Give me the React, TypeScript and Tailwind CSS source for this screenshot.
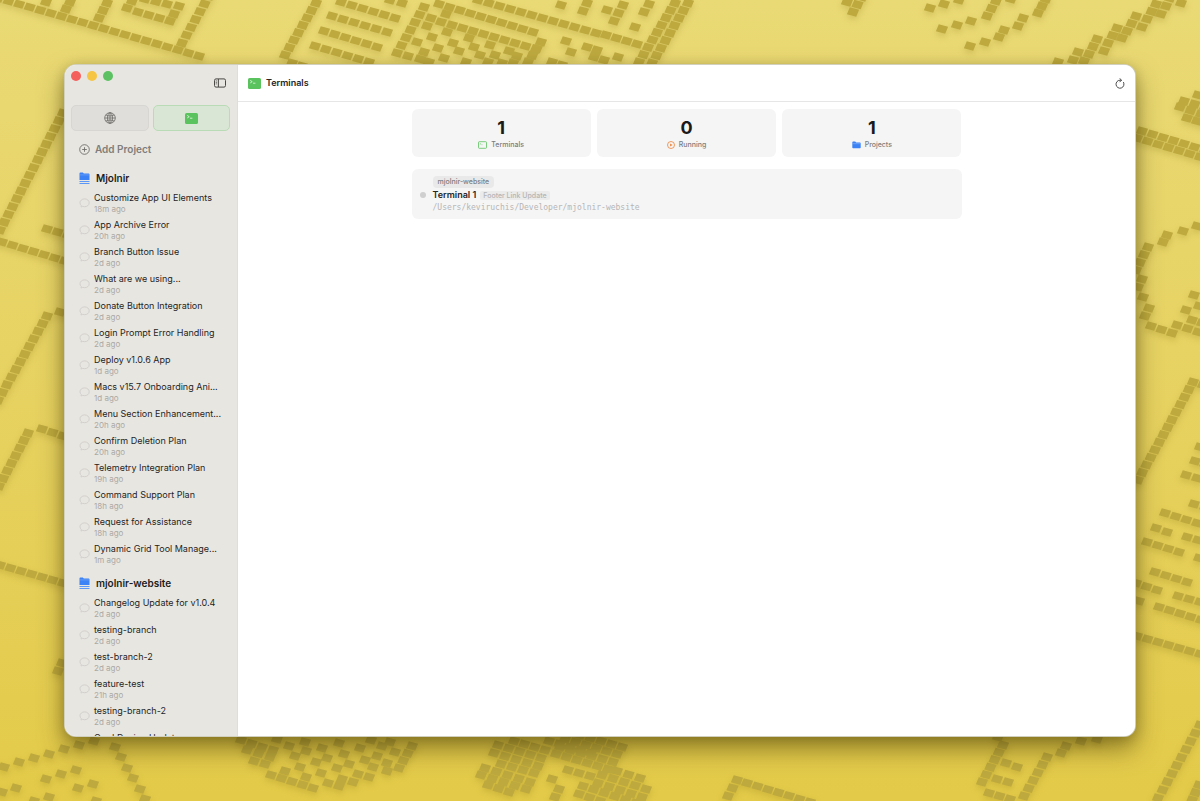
import React from 'react';

type Run = [number, number, number, number, number];

interface Conversation {
  title: string;
  time?: string;
}

interface Project {
  name: string;
  conversations: Conversation[];
}

const PROJECTS: Project[] = [
  {
    name: 'Mjolnir',
    conversations: [
      { title: 'Customize App UI Elements', time: '18m ago' },
      { title: 'App Archive Error', time: '20h ago' },
      { title: 'Branch Button Issue', time: '2d ago' },
      { title: 'What are we using...', time: '2d ago' },
      { title: 'Donate Button Integration', time: '2d ago' },
      { title: 'Login Prompt Error Handling', time: '2d ago' },
      { title: 'Deploy v1.0.6 App', time: '1d ago' },
      { title: 'Macs v15.7 Onboarding Ani...', time: '1d ago' },
      { title: 'Menu Section Enhancement...', time: '20h ago' },
      { title: 'Confirm Deletion Plan', time: '20h ago' },
      { title: 'Telemetry Integration Plan', time: '19h ago' },
      { title: 'Command Support Plan', time: '18h ago' },
      { title: 'Request for Assistance', time: '18h ago' },
      { title: 'Dynamic Grid Tool Manage...', time: '1m ago' },
    ],
  },
  {
    name: 'mjolnir-website',
    conversations: [
      { title: 'Changelog Update for v1.0.4', time: '2d ago' },
      { title: 'testing-branch', time: '2d ago' },
      { title: 'test-branch-2', time: '2d ago' },
      { title: 'feature-test', time: '21h ago' },
      { title: 'testing-branch-2', time: '2d ago' },
      { title: 'Card Design Update' },
    ],
  },
];

// Wallpaper tiles: [x1, y1, x2, y2, count], tiles spread evenly from start to end
const RUNS: Run[] = [
  // top left
  [-2, -2, 199, 56, 20], [70, 2, 66, 9, 2], [107, 3, 99, 18, 3], [132, 1, 127, 8, 2],
  [138, 12, 170, 21, 4], [174, 14, 179, 6, 2], [145, -1, 167, 4, 3], [209, -4, 182, 43, 7],
  // top centre
  [316, 3, 285, 55, 8], [292, 63, 302, 66, 2], [341, 2, 395, 18, 6], [332, 16, 387, 32, 6],
  [324, 31, 377, 47, 6], [315, 46, 369, 62, 6], [390, 0, 402, 3, 2], [424, 7, 397, 53, 7],
  [408, 56, 420, 59, 2], [431, 18, 427, 26, 2], [439, 4, 533, 32, 10], [446, 14, 441, 22, 2],
  [452, 25, 536, 49, 9], [541, 42, 528, 62, 4], [478, 0, 596, 33, 12], [606, 35, 637, 44, 4],
  [587, 3, 583, 11, 2], [587, 47, 597, 50, 2], [594, 57, 604, 60, 2], [552, 62, 562, 65, 2],
  [623, 5, 614, 21, 3], [649, 4, 644, 12, 2], [675, 3, 639, 62, 9], [688, 3, 652, 63, 9],
  [862, -3, 853, 12, 3],
  // top right
  [996, 1, 987, 16, 3], [1004, 30, 999, 37, 2], [1023, 18, 1018, 26, 2], [1046, -1, 1038, 13, 3],
  [1078, 52, 1073, 60, 2], [1089, 54, 1084, 61, 2], [1097, 39, 1089, 54, 3], [1117, 28, 1108, 43, 3],
  [1108, 43, 1104, 51, 2], [1127, 31, 1122, 38, 2], [1136, 16, 1127, 31, 3], [1147, 19, 1142, 27, 2],
  [1156, 4, 1147, 19, 3], [1166, 6, 1161, 14, 2],
  // right edge
  [1184, 101, 1205, 107, 3], [1180, 107, 1201, 114, 3], [1187, 118, 1207, 124, 3],
  [1142, 131, 1205, 150, 7], [1137, 138, 1200, 157, 7], [1167, 235, 1163, 242, 2],
  [1148, 247, 1136, 270, 4], [1142, 279, 1138, 287, 2], [1149, 308, 1145, 316, 2],
  [1151, 326, 1172, 333, 3], [1177, 325, 1198, 332, 3], [1192, 320, 1202, 323, 2],
  [1193, 382, 1138, 480, 14], [1195, 461, 1205, 464, 2], [1186, 475, 1197, 478, 2],
  [1194, 504, 1205, 507, 2], [1165, 513, 1197, 523, 4], [1156, 528, 1167, 532, 2],
  [1187, 537, 1198, 540, 2], [1147, 542, 1179, 552, 4], [1155, 572, 1187, 582, 4],
  [1136, 583, 1157, 590, 3], [1178, 596, 1200, 602, 3], [1159, 607, 1201, 620, 5],
  [1137, 636, 1200, 654, 7], [1200, 725, 1158, 798, 10], [1199, 785, 1192, 800, 3],
  // left edge
  [63, 113, 0, 230, 16], [2, 242, 65, 261, 7], [47, 229, 68, 235, 3], [47, 316, -2, 400, 12],
  [60, 312, 70, 315, 2], [28, 433, -1, 486, 8], [42, 429, 63, 436, 3], [0, 565, 63, 583, 7],
  // bottom
  [241, 740, 262, 747, 3], [247, 750, 270, 757, 3], [254, 761, 265, 764, 2],
  [271, 775, 313, 788, 5], [412, 746, 399, 768, 4],
  [514, 741, 545, 750, 4], [498, 745, 541, 758, 5], [494, 753, 538, 766, 5],
  [501, 764, 534, 773, 4], [485, 768, 530, 782, 5], [481, 775, 526, 789, 5],
  [488, 785, 509, 792, 3], [549, 741, 591, 753, 5], [580, 735, 622, 747, 5],
  [565, 739, 617, 754, 6], [560, 747, 613, 762, 6], [556, 754, 608, 769, 6],
  [568, 770, 590, 776, 3], [559, 789, 555, 797, 2], [617, 771, 640, 778, 3],
  [602, 775, 646, 789, 5], [598, 783, 642, 797, 5], [583, 786, 636, 803, 6],
  [579, 794, 600, 801, 3], [737, 780, 728, 796, 3], [747, 783, 810, 802, 7],
  [1003, 745, 982, 782, 6], [1006, 763, 1017, 767, 2], [997, 779, 1008, 782, 2],
  [989, 793, 1010, 799, 3], [1047, 757, 1024, 796, 6], [1066, 746, 1061, 753, 2],
];

const SINGLES: [number, number][] = [
  [46, 2], [561, 5], [566, 41], [571, 52], [607, 10], [635, 27], [618, 57], [847, 2],
  [447, 32], [432, 37], [417, 42], [453, 43], [438, 48], [424, 52], [469, 38],
  [459, 51], [444, 58], [474, 47], [490, 45], [480, 55], [495, 55], [509, 51], [466, 62], [488, 62],
  [502, 63], [517, 56], [513, 63], [429, 62],
  [930, 8], [944, 4], [959, 0], [942, 29], [957, 25], [971, 21], [970, 46], [985, 42],
  [1011, -1], [1058, 62], [1181, 3], [1170, -2], [1198, 95], [1197, 226], [1183, 231],
  [1143, 297], [1186, 310], [1194, 295], [1199, 306], [1203, 385], [1200, 447], [1199, 558],
  [1139, 601], [62, 663], [58, 671],
  [4, 767], [19, 762], [34, 758], [49, 754], [64, 749], [79, 745], [94, 741], [115, 747],
  [121, 757], [127, 768], [133, 778], [140, 789], [145, 799], [76, 770], [61, 774], [46, 779],
  [93, 784], [78, 788], [16, 788], [2, 792], [49, 797], [34, 801], [96, 801],
  [277, 739], [305, 742], [289, 746], [273, 750], [339, 743], [322, 748], [306, 751],
  [295, 756], [316, 762], [300, 767], [285, 771], [327, 758], [344, 754], [349, 764],
  [337, 768], [321, 773], [306, 777], [328, 783], [339, 786], [342, 779], [353, 782],
  [358, 774], [369, 777], [373, 767], [387, 771], [365, 760], [377, 756], [360, 748],
  [390, 742], [371, 740], [382, 746], [395, 752], [387, 763], [552, 779],
  [1081, 741], [1097, 739], [998, 737],
];

const tile = (x: number, y: number) => `M${x - 3.2} ${y - 4.7}l9.3 2.5l-2.9 6.9l-9.3 -2.5z`;

const tilePath = [
  ...RUNS.flatMap(([x1, y1, x2, y2, n]) =>
    Array.from({ length: n }, (_, i) => tile(x1 + ((x2 - x1) * i) / (n - 1), y1 + ((y2 - y1) * i) / (n - 1)))
  ),
  ...SINGLES.map(([x, y]) => tile(x, y)),
].join('');

const Wallpaper: React.FC = () => (
  <svg className="absolute inset-0 w-full h-full" viewBox="0 0 1200 801" preserveAspectRatio="xMidYMid slice" aria-hidden="true">
    <path d={tilePath} fill="#bda93e" className="drop-shadow-[0_3px_3px_rgba(150,130,30,0.3)]" />
  </svg>
);

const TerminalIcon: React.FC<{ className?: string }> = ({ className }) => (
  <svg viewBox="0 0 13 11" className={className} aria-hidden="true">
    <rect width="13" height="11" rx="1.6" fill="#5ac35e" />
    <path d="M2.2 2.4l2 1.3l-2 1.3M5 5.2h2.4" fill="none" stroke="#e9f8e9" strokeWidth="0.8" />
  </svg>
);

const GlobeIcon: React.FC = () => (
  <svg viewBox="0 0 12 12" className="size-3" fill="none" stroke="#6b6a67" strokeWidth="0.8" aria-hidden="true">
    <circle cx="6" cy="6" r="5.3" />
    <ellipse cx="6" cy="6" rx="2.5" ry="5.3" />
    <path d="M0.7 6h10.6M6 0.7v10.6M1.8 2.9c2.5 1.4 5.9 1.4 8.4 0M1.8 9.1c2.5 -1.4 5.9 -1.4 8.4 0" />
  </svg>
);

const SidebarIcon: React.FC = () => (
  <svg viewBox="0 0 12 10" className="w-3 h-2.5" fill="none" stroke="#4a4946" aria-hidden="true">
    <rect x="0.5" y="0.9" width="11" height="8.2" rx="1.5" />
    <path d="M4.4 1v8" />
    <path d="M1.7 2.9h1.4M1.7 4.4h1.4M1.7 5.9h1.4" strokeWidth="0.7" />
  </svg>
);

const PlusCircleIcon: React.FC = () => (
  <svg viewBox="0 0 11 11" className="size-[11px]" fill="none" stroke="#6f6e6b" strokeWidth="0.9" aria-hidden="true">
    <circle cx="5.5" cy="5.5" r="4.8" />
    <path d="M5.5 3.2v4.6M3.2 5.5h4.6" />
  </svg>
);

const ProjectIcon: React.FC = () => (
  <svg viewBox="0 0 11 13" className="w-[11px] h-[13px]" aria-hidden="true">
    <path d="M0.5 1.4q0 -0.9 0.9 -0.9h2.4l1 1h4.8q0.9 0 0.9 0.9v5.6h-10z" fill="#3b82f6" />
    <path d="M0.5 2.9h10" stroke="#8db6f7" strokeWidth="0.5" />
    <path d="M0.5 9.5h10M0.5 11.5h10" stroke="#5b97f6" />
  </svg>
);

const FolderIcon: React.FC = () => (
  <svg viewBox="0 0 9 8" className="w-[9px] h-2" aria-hidden="true">
    <path d="M0.3 1.4q0 -0.8 0.8 -0.8h2.1l0.9 0.9h3.8q0.8 0 0.8 0.8v4.2q0 0.8 -0.8 0.8h-6.8q-0.8 0 -0.8 -0.8z" fill="#3b82f6" />
    <path d="M0.3 2.7h8.4" stroke="#9cc1fa" strokeWidth="0.5" />
  </svg>
);

const OutlineTerminalIcon: React.FC = () => (
  <svg viewBox="0 0 9 8" className="w-[9px] h-2" fill="none" stroke="#5ac35e" strokeWidth="0.8" aria-hidden="true">
    <rect x="0.5" y="0.7" width="8" height="6.6" rx="0.8" />
    <path d="M1.8 2.2l1 0.7l-1 0.7M3.3 3.7h1.2" strokeWidth="0.5" />
  </svg>
);

const PlayIcon: React.FC = () => (
  <svg viewBox="0 0 8 8" className="size-2" fill="none" stroke="#ee8439" strokeWidth="0.8" aria-hidden="true">
    <circle cx="4" cy="4" r="3.5" />
    <path d="M3.1 2.6l2.4 1.4l-2.4 1.4z" fill="#ee8439" stroke="none" />
  </svg>
);

const BubbleIcon: React.FC = () => (
  <svg viewBox="0 0 11 10" className="w-[11px] h-2.5 shrink-0" fill="none" stroke="#cfcdc9" strokeWidth="0.9" aria-hidden="true">
    <path d="M5.6 0.9c2.7 0 4.6 1.7 4.6 3.9s-1.9 3.9 -4.6 3.9c-0.7 0 -1.3 -0.1 -1.9 -0.3c-0.5 0.3 -1.1 0.5 -1.8 0.5c0.3 -0.4 0.4 -0.9 0.4 -1.4c-0.8 -0.7 -1.3 -1.6 -1.3 -2.7c0 -2.2 1.9 -3.9 4.6 -3.9z" />
  </svg>
);

const RefreshIcon: React.FC = () => (
  <svg viewBox="0 0 10 11" className="w-2.5 h-[11px]" fill="none" stroke="#3a3a3a" strokeWidth="0.9" strokeLinecap="round" strokeLinejoin="round" aria-hidden="true">
    <path d="M8.6 4.4a4 4 0 1 1 -3.6 -2.2h1.2" />
    <path d="M4.8 0.5l1.7 1.7l-1.7 1.7" />
  </svg>
);

const STATS = [
  { value: 1, label: 'Terminals', icon: <OutlineTerminalIcon /> },
  { value: 0, label: 'Running', icon: <PlayIcon /> },
  { value: 1, label: 'Projects', icon: <FolderIcon /> },
];

const Sidebar: React.FC = () => (
  <aside className="w-[173px] shrink-0 bg-[#e8e6e1] border-r border-[#e0deda] flex flex-col overflow-hidden">
    <div className="flex justify-between h-10 shrink-0 pl-1.5 pr-[11px]">
      <div className="flex gap-1.5 pt-1.5">
        <button aria-label="Close" className="size-2.5 rounded-full bg-[#f45f5b]" />
        <button aria-label="Minimize" className="size-2.5 rounded-full bg-[#f5c543]" />
        <button aria-label="Zoom" className="size-2.5 rounded-full bg-[#5cc162]" />
      </div>
      <button aria-label="Toggle sidebar" className="mt-[13px] self-start">
        <SidebarIcon />
      </button>
    </div>

    <div className="flex gap-1 shrink-0 pl-1.5 pr-[7px]">
      <button aria-label="Web" className="flex-1 h-[26px] flex items-center justify-center rounded-[5px] bg-[#e0deda] border border-[#d8d6d2]">
        <GlobeIcon />
      </button>
      <button aria-label="Terminals" className="flex-1 h-[26px] flex items-center justify-center rounded-[5px] bg-[#d9e6d5] border border-[#b9dcb6]">
        <TerminalIcon className="w-[13px] h-[11px]" />
      </button>
    </div>

    <button className="flex items-center gap-[5px] shrink-0 mt-2.5 pl-3.5 h-4 text-[10px] font-semibold text-[#7f7e7b]">
      <PlusCircleIcon />
      Add Project
    </button>

    <nav className="mt-[11px] pl-3.5 pr-2 flex flex-col gap-[7px]">
      {PROJECTS.map((project) => (
        <section key={project.name}>
          <h2 className="flex items-center gap-1.5 h-5 text-[10px] font-semibold text-[#1c1c1b]">
            <ProjectIcon />
            {project.name}
          </h2>
          <ul>
            {project.conversations.map((c) => (
              <li key={c.title}>
                <button className="w-full h-[27px] pt-[3px] flex items-start gap-1 text-left">
                  <span className="pt-[7px]">
                    <BubbleIcon />
                  </span>
                  <span className="min-w-0 flex flex-col whitespace-nowrap">
                    <span className="text-[9px] leading-[14px] text-[#1f1f1e]">{c.title}</span>
                    {c.time && <span className="text-[8px] leading-[9px] text-[#aba9a5]">{c.time}</span>}
                  </span>
                </button>
              </li>
            ))}
          </ul>
        </section>
      ))}
    </nav>
  </aside>
);

const App: React.FC = () => {
  return (
    <div className="relative h-screen overflow-hidden bg-linear-to-b from-[#eada75] to-[#e3ca48] px-16 py-16 font-['Inter','Liberation_Sans',sans-serif]">
      <Wallpaper />

      {/* App window */}
      <div className="relative flex h-full rounded-xl overflow-hidden bg-white border border-[#8d8a60]/40 shadow-[0_12px_24px_rgba(60,50,0,0.5),0_2px_12px_rgba(60,50,0,0.2)]">
        <Sidebar />

        <main className="flex-1 min-w-0 flex flex-col bg-white">
          <header className="flex items-center justify-between h-[37px] shrink-0 px-2.5 border-b border-[#e6e6e6]">
            <h1 className="flex items-center gap-[5px] text-[9px] font-semibold text-[#262626]">
              <TerminalIcon className="w-[13px] h-[11px]" />
              Terminals
            </h1>
            <button aria-label="Refresh">
              <RefreshIcon />
            </button>
          </header>

          <div className="w-full max-w-[550px] mx-auto pt-[7px]">
            <div className="grid grid-cols-3 gap-1.5">
              {STATS.map((s) => (
                <div key={s.label} className="h-12 rounded-md bg-[#f5f5f5] flex flex-col items-center pt-[9px]">
                  <span className="text-[18px] leading-5 font-bold text-[#1a1a1a]">{s.value}</span>
                  <span className="mt-0.5 flex items-center gap-1 text-[7px] leading-[10px] font-medium text-[#7c7c7c]">
                    {s.icon}
                    {s.label}
                  </span>
                </div>
              ))}
            </div>

            <button className="mt-3 w-full h-[50px] rounded-md bg-[#f5f5f5] flex items-center gap-[7px] pl-2 pt-0.5 text-left">
              <span className="size-1.5 rounded-full bg-[#cfcfcf]" />
              <span className="flex flex-col items-start">
                <span className="rounded-sm bg-[#e9e9e9] px-[5px] text-[7px] leading-[12px] font-medium text-[#7c7c7c]">mjolnir-website</span>
                <span className="flex items-center gap-1">
                  <span className="text-[9px] leading-[14px] font-semibold text-[#262626]">Terminal 1</span>
                  <span className="rounded-xs bg-[#ebebeb] px-[3px] text-[7px] leading-[9px] font-medium text-[#b4b4b4]">Footer Link Update</span>
                </span>
                <span className="font-['DejaVu_Sans_Mono','Liberation_Mono',monospace] text-[8px] leading-[12px] text-[#b6b6b6]">/Users/keviruchis/Developer/mjolnir-website</span>
              </span>
            </button>
          </div>
        </main>
      </div>
    </div>
  );
};

export default App;
